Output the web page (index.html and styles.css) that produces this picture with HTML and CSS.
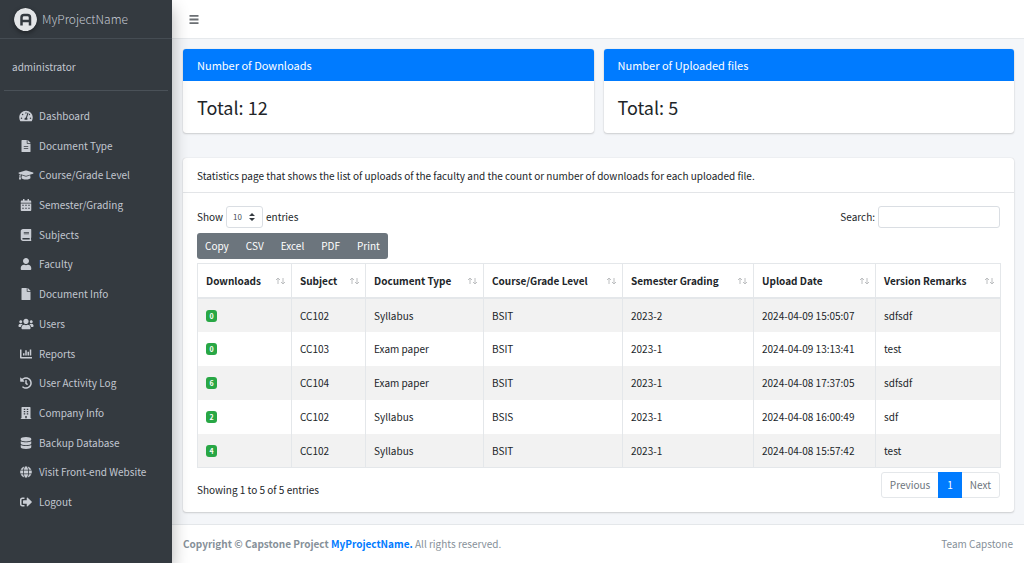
FILE: index.html
```html
<!DOCTYPE html>
<html lang="en">
<head>
    <meta charset="UTF-8">
    <meta name="viewport" content="width=device-width, initial-scale=1.0">
    <title>MyProjectName | Dashboard</title>
    <link rel="stylesheet" href="styles.css">
</head>
<body>
    <div class="wrapper">
        <aside class="sidebar">
            <a href="#" class="brand">
                <svg class="brand-logo" viewBox="0 0 46 46" aria-hidden="true">
                    <circle cx="23" cy="23" r="23" fill="#e3e5e7"/>
                    <path d="M15 35V19q0-5 5-5h7q5 0 5 5v16M15 26h17" fill="none" stroke="#343a40" stroke-width="5"/>
                </svg>
                <span>MyProjectName</span>
            </a>
            <div class="user-panel"><a href="#">administrator</a></div>
            <nav class="menu">
                <a href="#"><svg viewBox="0 0 576 512"><path d="M288 32C128.94 32 0 160.94 0 320c0 52.8 14.25 102.26 39.06 144.8 5.61 9.62 16.3 15.2 27.44 15.2h443c11.14 0 21.83-5.58 27.44-15.2C561.75 422.26 576 372.8 576 320c0-159.06-128.94-288-288-288zm0 64c14.71 0 26.58 10.13 30.32 23.65-1.11 2.26-2.64 4.23-3.45 6.67l-9.22 27.67c-5.13 3.49-10.97 6.01-17.64 6.01-17.67 0-32-14.33-32-32S270.33 96 288 96zM96 384c-17.67 0-32-14.33-32-32s14.33-32 32-32 32 14.33 32 32-14.33 32-32 32zm48-160c-17.67 0-32-14.33-32-32s14.33-32 32-32 32 14.33 32 32-14.33 32-32 32zm246.77-72.41l-61.33 184C343.13 347.33 352 364.54 352 384c0 11.72-3.38 22.55-8.88 32H232.88c-5.5-9.45-8.88-20.28-8.88-32 0-33.94 26.5-61.43 59.9-63.59l61.34-184.01c4.17-12.56 17.73-19.45 30.36-15.17 12.57 4.19 19.35 17.79 15.17 30.36zm14.66 57.2l15.52-46.55c3.47-1.29 7.13-2.23 11.05-2.23 17.67 0 32 14.33 32 32s-14.33 32-32 32c-11.38-.01-20.89-6.28-26.57-15.22zM480 384c-17.67 0-32-14.33-32-32s14.33-32 32-32 32 14.33 32 32-14.33 32-32 32z"/></svg>Dashboard</a>
                <a href="#"><svg viewBox="0 0 384 512"><path d="M224 136V0H24C10.7 0 0 10.7 0 24v464c0 13.3 10.7 24 24 24h336c13.3 0 24-10.7 24-24V160H248c-13.2 0-24-10.8-24-24zm64 236c0 6.6-5.4 12-12 12H108c-6.6 0-12-5.4-12-12v-8c0-6.6 5.4-12 12-12h168c6.6 0 12 5.4 12 12v8zm0-96c0 6.6-5.4 12-12 12H108c-6.6 0-12-5.4-12-12v-8c0-6.6 5.4-12 12-12h168c6.6 0 12 5.4 12 12v8zM384 121.9v6.1H256V0h6.1c6.4 0 12.5 2.5 17 7l97.9 98c4.5 4.5 7 10.6 7 16.9z"/></svg>Document Type</a>
                <a href="#"><svg viewBox="0 0 640 512"><path d="M622.34 153.2L343.4 67.5c-15.2-4.67-31.6-4.67-46.79 0L17.66 153.2c-23.54 7.23-23.54 38.36 0 45.59l48.63 14.94c-10.67 13.19-17.23 29.28-17.88 46.9C38.78 266.15 32 276.11 32 288c0 10.78 5.68 19.85 13.86 25.65L20.33 428.53C18.11 438.52 25.71 448 35.94 448h56.11c10.24 0 17.84-9.48 15.62-19.47L82.14 313.65C90.32 307.85 96 298.78 96 288c0-11.57-6.47-21.25-15.66-26.87.76-15.02 8.44-28.3 20.69-36.72L296.6 284.5c9.06 2.78 26.44 6.25 46.79 0l278.95-85.7c23.55-7.24 23.55-38.36 0-45.6zM352.79 315.09c-28.53 8.76-52.84 3.92-65.59 0l-145.02-44.55L128 384c0 35.35 85.96 64 192 64s192-28.65 192-64l-14.18-113.47-145.03 44.56z"/></svg>Course/Grade Level</a>
                <a href="#"><svg viewBox="0 0 448 512"><path fill-rule="evenodd" d="M0 192h448v272c0 26.5-21.5 48-48 48H48c-26.5 0-48-21.5-48-48zM64 244v48h64v-48zM192 244v48h64v-48zM320 244v48h64v-48zM64 372v48h64v-48zM192 372v48h64v-48zM320 372v48h64v-48zM400 64h-48V16c0-8.8-7.2-16-16-16h-32c-8.8 0-16 7.2-16 16v48H160V16c0-8.8-7.2-16-16-16h-32c-8.8 0-16 7.2-16 16v48H48C21.5 64 0 85.5 0 112v48h448v-48c0-26.5-21.5-48-48-48z"/></svg>Semester/Grading</a>
                <a href="#"><svg viewBox="0 0 448 512"><path d="M448 360V24c0-13.3-10.7-24-24-24H96C43 0 0 43 0 96v320c0 53 43 96 96 96h328c13.3 0 24-10.7 24-24v-16c0-7.5-3.5-14.3-8.9-18.7-4.2-15.4-4.2-59.3 0-74.7 5.4-4.3 8.9-11.1 8.9-18.6zM128 134c0-3.3 2.7-6 6-6h212c3.3 0 6 2.7 6 6v20c0 3.3-2.7 6-6 6H134c-3.3 0-6-2.7-6-6v-20zm0 64c0-3.3 2.7-6 6-6h212c3.3 0 6 2.7 6 6v20c0 3.3-2.7 6-6 6H134c-3.3 0-6-2.7-6-6v-20zm253.4 250H96c-17.7 0-32-14.3-32-32 0-17.6 14.4-32 32-32h285.4c-1.9 17.1-1.9 46.9 0 64z"/></svg>Subjects</a>
                <a href="#"><svg viewBox="0 0 448 512"><path d="M224 256c70.7 0 128-57.3 128-128S294.7 0 224 0 96 57.3 96 128s57.3 128 128 128zm89.6 32h-16.7c-22.2 10.2-46.9 16-72.9 16s-50.6-5.8-72.9-16h-16.7C60.2 288 0 348.2 0 422.4V464c0 26.5 21.5 48 48 48h352c26.5 0 48-21.5 48-48v-41.6c0-74.2-60.2-134.4-134.4-134.4z"/></svg>Faculty</a>
                <a href="#"><svg viewBox="0 0 384 512"><path d="M224 136V0H24C10.7 0 0 10.7 0 24v464c0 13.3 10.7 24 24 24h336c13.3 0 24-10.7 24-24V160H248c-13.2 0-24-10.8-24-24zm160-14.1v6.1H256V0h6.1c6.4 0 12.5 2.5 17 7l97.9 98c4.5 4.5 7 10.6 7 16.9z"/></svg>Document Info</a>
                <a href="#"><svg viewBox="0 0 640 512"><path d="M96 224c35.3 0 64-28.7 64-64s-28.7-64-64-64-64 28.7-64 64 28.7 64 64 64zm448 0c35.3 0 64-28.7 64-64s-28.7-64-64-64-64 28.7-64 64 28.7 64 64 64zm32 32h-64c-17.6 0-33.5 7.1-45.1 18.6 40.3 22.1 68.9 62 75.1 109.4h66c17.7 0 32-14.3 32-32v-32c0-35.3-28.7-64-64-64zm-256 0c61.9 0 112-50.1 112-112S381.9 32 320 32 208 82.1 208 144s50.1 112 112 112zm76.8 32h-8.3c-20.8 10-43.9 16-68.5 16s-47.6-6-68.5-16h-8.3C179.6 288 128 339.6 128 403.2V432c0 26.5 21.5 48 48 48h288c26.5 0 48-21.5 48-48v-28.8c0-63.6-51.6-115.2-115.2-115.2zm-223.7-13.4C161.5 263.1 145.6 256 128 256H64c-35.3 0-64 28.7-64 64v32c0 17.7 14.3 32 32 32h65.9c6.3-47.4 34.9-87.3 75.2-109.4z"/></svg>Users</a>
                <a href="#"><svg viewBox="0 0 512 512"><path d="M332.8 320h38.4c6.4 0 12.8-6.4 12.8-12.8V172.8c0-6.4-6.4-12.8-12.8-12.8h-38.4c-6.4 0-12.8 6.4-12.8 12.8v134.4c0 6.4 6.4 12.8 12.8 12.8zm96 0h38.4c6.4 0 12.8-6.4 12.8-12.8V76.8c0-6.4-6.4-12.8-12.8-12.8h-38.4c-6.4 0-12.8 6.4-12.8 12.8v230.4c0 6.4 6.4 12.8 12.8 12.8zm-288 0h38.4c6.4 0 12.8-6.4 12.8-12.8v-70.4c0-6.4-6.4-12.8-12.8-12.8h-38.4c-6.4 0-12.8 6.4-12.8 12.8v70.4c0 6.4 6.4 12.8 12.8 12.8zm96 0h38.4c6.4 0 12.8-6.4 12.8-12.8V108.8c0-6.4-6.4-12.8-12.8-12.8h-38.4c-6.4 0-12.8 6.4-12.8 12.8v198.4c0 6.4 6.4 12.8 12.8 12.8zM496 384H64V80c0-8.84-7.16-16-16-16H16C7.16 64 0 71.16 0 80v336c0 17.67 14.33 32 32 32h464c8.84 0 16-7.16 16-16v-32c0-8.84-7.16-16-16-16z"/></svg>Reports</a>
                <a href="#"><svg viewBox="0 0 512 512"><path d="M504 255.531c.253 136.64-111.18 248.372-247.82 248.468-59.015.042-113.223-20.53-155.822-54.911-11.077-8.94-11.905-25.541-1.839-35.607l11.267-11.267c8.609-8.609 22.353-9.551 31.891-1.984C173.062 425.135 212.781 440 256 440c101.705 0 184-82.311 184-184 0-101.705-82.311-184-184-184-48.814 0-93.149 18.969-126.068 49.932l50.754 50.754c10.08 10.08 2.941 27.314-11.313 27.314H24c-8.837 0-16-7.163-16-16V38.627c0-14.254 17.234-21.393 27.314-11.314l49.372 49.372C129.209 34.136 189.552 8 256 8c136.81 0 247.747 110.78 248 247.531zm-180.912 78.784l9.823-12.63c8.138-10.463 6.253-25.542-4.21-33.679L288 256.349V152c0-13.255-10.745-24-24-24h-16c-13.255 0-24 10.745-24 24v135.651l65.409 50.874c10.463 8.137 25.541 6.253 33.679-4.21z"/></svg>User Activity Log</a>
                <a href="#"><svg viewBox="0 0 448 512"><path fill-rule="evenodd" d="M436 480h-20V24c0-13.255-10.745-24-24-24H56C42.745 0 32 10.745 32 24v456H12c-6.627 0-12 5.373-12 12v20h448v-20c0-6.627-5.373-12-12-12zM128 76v52h64V76zM256 76v52h64V76zM128 172v52h64v-52zM256 172v52h64v-52zM128 268v52h64v-52zM256 268v52h64v-52zM192 384v96h64v-96z"/></svg>Company Info</a>
                <a href="#"><svg viewBox="0 0 448 512"><path d="M448 73.143v45.714C448 159.143 347.667 192 224 192S0 159.143 0 118.857V73.143C0 32.857 100.333 0 224 0s224 32.857 224 73.143zM448 176v102.857C448 319.143 347.667 352 224 352S0 319.143 0 278.857V176c48.125 33.143 136.208 48.572 224 48.572S399.874 209.143 448 176zm0 160v102.857C448 479.143 347.667 512 224 512S0 479.143 0 438.857V336c48.125 33.143 136.208 48.572 224 48.572S399.874 369.143 448 336z"/></svg>Backup Database</a>
                <a href="#"><svg viewBox="0 0 496 512"><path d="M336.5 160C322 70.7 287.8 8 248 8s-74 62.7-88.5 152h177zM152 256c0 22.2 1.2 43.5 3.3 64h185.3c2.1-20.5 3.3-41.8 3.3-64s-1.2-43.5-3.3-64H155.3c-2.1 20.5-3.3 41.8-3.3 64zm324.7-96c-28.6-67.9-86.5-120.4-158-141.6 24.4 33.8 41.2 84.7 50 141.6h108zM177.2 18.4C105.8 39.6 47.8 92.1 19.3 160h108c8.7-56.9 25.5-107.8 49.9-141.6zM487.4 192H372.7c2.1 21 3.3 42.5 3.3 64s-1.2 43-3.3 64h114.6c5.5-20.5 8.6-41.8 8.6-64s-3.1-43.5-8.5-64zM120 256c0-21.5 1.2-43 3.3-64H8.6C3.2 212.5 0 233.8 0 256s3.2 43.5 8.6 64h114.6c-2-21-3.2-42.5-3.2-64zm39.5 96c14.5 89.3 48.7 152 88.5 152s74-62.7 88.5-152h-177zm159.3 141.6c71.4-21.2 129.4-73.7 158-141.6h-108c-8.8 56.9-25.6 107.8-50 141.6zM19.3 352c28.6 67.9 86.5 120.4 158 141.6-24.4-33.8-41.2-84.7-50-141.6h-108z"/></svg>Visit Front-end Website</a>
                <a href="#"><svg viewBox="0 0 512 512"><path d="M497 273L329 441c-15 15-41 4.5-41-17v-96H152c-13.3 0-24-10.7-24-24v-96c0-13.3 10.7-24 24-24h136V88c0-21.4 25.9-32 41-17l168 168c9.3 9.4 9.3 24.6 0 34zM192 436v-40c0-6.6-5.4-12-12-12H96c-17.7 0-32-14.3-32-32V160c0-17.7 14.3-32 32-32h84c6.6 0 12-5.4 12-12V76c0-6.6-5.4-12-12-12H96c-53 0-96 43-96 96v192c0 53 43 96 96 96h84c6.6 0 12-5.4 12-12z"/></svg>Logout</a>
            </nav>
        </aside>

        <div class="main">
            <header class="navbar">
                <button type="button" class="toggle" aria-label="Toggle menu">
                    <svg viewBox="0 0 10 10"><path d="M0 1h10M0 5h10M0 9h10" stroke="#6b6f73" stroke-width="2"/></svg>
                </button>
            </header>

            <main class="content">
                <div class="totals">
                    <section class="card">
                        <div class="card-header primary">Number of Downloads</div>
                        <h2 class="total">Total: 12</h2>
                    </section>
                    <section class="card">
                        <div class="card-header primary">Number of Uploaded files</div>
                        <h2 class="total">Total: 5</h2>
                    </section>
                </div>

                <section class="card">
                    <div class="card-header">Statistics page that shows the list of uploads of the faculty and the count or number of downloads for each uploaded file.</div>
                    <div class="card-body">
                        <div class="filters">
                            <div class="length">
                                <label for="pageLength">Show</label>
                                <span class="select-box">
                                    <select id="pageLength">
                                        <option>10</option>
                                        <option>25</option>
                                        <option>50</option>
                                        <option>100</option>
                                    </select>
                                    <svg viewBox="0 0 6 8" aria-hidden="true"><path d="M3 0l3 3H0zM3 8l3-3H0z" fill="#343a40"/></svg>
                                </span>
                                <span>entries</span>
                            </div>
                            <div class="search">
                                <label for="search">Search:</label>
                                <input type="search" id="search">
                            </div>
                        </div>

                        <div class="btn-group">
                            <button type="button">Copy</button>
                            <button type="button">CSV</button>
                            <button type="button">Excel</button>
                            <button type="button">PDF</button>
                            <button type="button">Print</button>
                        </div>

                        <table class="data">
                            <colgroup>
                                <col class="col-downloads">
                                <col class="col-subject">
                                <col class="col-type">
                                <col class="col-course">
                                <col class="col-semester">
                                <col class="col-date">
                                <col class="col-remarks">
                            </colgroup>
                            <thead>
                                <tr>
                                    <th><div class="sort">Downloads <svg viewBox="0 0 11 8"><path d="M3 7V1M1 3l2-2 2 2M8 1v6M6 5l2 2 2-2"/></svg></div></th>
                                    <th><div class="sort">Subject <svg viewBox="0 0 11 8"><path d="M3 7V1M1 3l2-2 2 2M8 1v6M6 5l2 2 2-2"/></svg></div></th>
                                    <th><div class="sort">Document Type <svg viewBox="0 0 11 8"><path d="M3 7V1M1 3l2-2 2 2M8 1v6M6 5l2 2 2-2"/></svg></div></th>
                                    <th><div class="sort">Course/Grade Level <svg viewBox="0 0 11 8"><path d="M3 7V1M1 3l2-2 2 2M8 1v6M6 5l2 2 2-2"/></svg></div></th>
                                    <th><div class="sort">Semester Grading <svg viewBox="0 0 11 8"><path d="M3 7V1M1 3l2-2 2 2M8 1v6M6 5l2 2 2-2"/></svg></div></th>
                                    <th><div class="sort">Upload Date <svg viewBox="0 0 11 8"><path d="M3 7V1M1 3l2-2 2 2M8 1v6M6 5l2 2 2-2"/></svg></div></th>
                                    <th><div class="sort">Version Remarks <svg viewBox="0 0 11 8"><path d="M3 7V1M1 3l2-2 2 2M8 1v6M6 5l2 2 2-2"/></svg></div></th>
                                </tr>
                            </thead>
                            <tbody>
                                <tr>
                                    <td><span class="badge">0</span></td>
                                    <td>CC102</td>
                                    <td>Syllabus</td>
                                    <td>BSIT</td>
                                    <td>2023-2</td>
                                    <td>2024-04-09 15:05:07</td>
                                    <td>sdfsdf</td>
                                </tr>
                                <tr>
                                    <td><span class="badge">0</span></td>
                                    <td>CC103</td>
                                    <td>Exam paper</td>
                                    <td>BSIT</td>
                                    <td>2023-1</td>
                                    <td>2024-04-09 13:13:41</td>
                                    <td>test</td>
                                </tr>
                                <tr>
                                    <td><span class="badge">6</span></td>
                                    <td>CC104</td>
                                    <td>Exam paper</td>
                                    <td>BSIT</td>
                                    <td>2023-1</td>
                                    <td>2024-04-08 17:37:05</td>
                                    <td>sdfsdf</td>
                                </tr>
                                <tr>
                                    <td><span class="badge">2</span></td>
                                    <td>CC102</td>
                                    <td>Syllabus</td>
                                    <td>BSIS</td>
                                    <td>2023-1</td>
                                    <td>2024-04-08 16:00:49</td>
                                    <td>sdf</td>
                                </tr>
                                <tr>
                                    <td><span class="badge">4</span></td>
                                    <td>CC102</td>
                                    <td>Syllabus</td>
                                    <td>BSIT</td>
                                    <td>2023-1</td>
                                    <td>2024-04-08 15:57:42</td>
                                    <td>test</td>
                                </tr>
                            </tbody>
                        </table>

                        <div class="table-footer">
                            <span>Showing 1 to 5 of 5 entries</span>
                            <nav class="pagination">
                                <a href="#">Previous</a>
                                <a href="#" class="active">1</a>
                                <a href="#">Next</a>
                            </nav>
                        </div>
                    </div>
                </section>
            </main>

            <footer class="footer">
                <div><strong>Copyright © Capstone Project <a href="#">MyProjectName.</a></strong> All rights reserved.</div>
                <div>Team Capstone</div>
            </footer>
        </div>
    </div>
</body>
</html>
```
FILE: styles.css
```css
* {
    box-sizing: border-box;
}

body {
    margin: 0;
    font-family: "Noto Sans CJK SC", "Open Sans", sans-serif;
    font-size: 10px;
    line-height: 16px;
    color: #212529;
    background-color: #f4f6f9;
}

a {
    color: #007bff;
    text-decoration: none;
}

button, input, select {
    font: inherit;
}

.wrapper {
    display: flex;
    min-height: 100vh;
}

/* Sidebar */
.sidebar {
    display: flex;
    flex-direction: column;
    flex: 0 0 172px;
    z-index: 1;
    background-color: #343a40;
    box-shadow: 0 8px 16px rgba(0, 0, 0, 0.3);
}

.sidebar a {
    color: #c2c7d0;
}

.sidebar .brand {
    display: flex;
    align-items: center;
    gap: 5px;
    height: 39px;
    padding-left: 14px;
    border-bottom: 1px solid #454c53;
    font-size: 12px;
    font-weight: 300;
}

.brand-logo {
    width: 23px;
    height: 23px;
    border-radius: 50%;
    box-shadow: 0 2px 5px rgba(0, 0, 0, 0.4);
}

.user-panel {
    margin: 0 4px;
    padding: 20px 8px 15px;
    border-bottom: 1px solid #4a5158;
}

.menu {
    display: flex;
    flex: 1;
    flex-direction: column;
    justify-content: space-between;
    padding: 11px 6px 47px 18px;
}

.menu a {
    display: flex;
    align-items: center;
    gap: 5px;
    height: 28px;
}

.menu svg {
    width: 16px;
    height: 12px;
    fill: #c9cdd4;
}

/* Main column */
.main {
    display: flex;
    flex: 1;
    flex-direction: column;
    min-width: 0;
}

.navbar {
    display: flex;
    align-items: center;
    height: 39px;
    padding: 0 17px;
    background-color: #fff;
    border-bottom: 1px solid #e6e9ec;
}

.toggle {
    display: flex;
    padding: 0;
    border: none;
    background: none;
    cursor: pointer;
}

.toggle svg {
    width: 10px;
    height: 9px;
}

.content {
    flex: 1;
    padding: 10px 10px 11px 11px;
}

.totals {
    display: grid;
    grid-template-columns: 1fr 1fr;
    gap: 10px;
    margin-bottom: 25px;
}

.card {
    background-color: #fff;
    border-radius: 3px;
    box-shadow: 0 0 1px rgba(0, 0, 0, 0.2), 0 1px 2px rgba(0, 0, 0, 0.15);
}

.card-header {
    padding: 10px 14px 8px;
    border-bottom: 1px solid #e3e5e8;
}

.card-header.primary {
    padding: 8px 14px;
    border-bottom: none;
    border-radius: 3px 3px 0 0;
    background-color: #007bff;
    color: #fff;
    font-size: 11px;
}

.total {
    margin: 0;
    padding: 14px;
    font-size: 18px;
    font-weight: 400;
    line-height: 24px;
}

.card-body {
    padding: 13px 14px 14px;
}

.filters {
    display: flex;
    justify-content: space-between;
    margin-bottom: 5px;
}

.length, .search {
    display: flex;
    align-items: center;
    gap: 3px;
}

.select-box {
    position: relative;
}

.select-box select {
    display: block;
    width: 37px;
    height: 22px;
    padding: 0 6px;
    appearance: none;
    border: 1px solid #dadee3;
    border-radius: 3px;
    background-color: #fff;
    color: #495057;
    font-size: 8px;
}

.select-box svg {
    position: absolute;
    top: 7px;
    right: 8px;
    width: 6px;
    height: 8px;
    pointer-events: none;
}

.search input {
    width: 122px;
    height: 22px;
    padding: 0 6px;
    border: 1px solid #dadee3;
    border-radius: 3px;
}

.btn-group {
    display: inline-flex;
    gap: 1px;
    margin-bottom: 4px;
    border-radius: 3px;
    background-color: #6c757d;
}

.btn-group button {
    height: 26px;
    padding: 0 8px;
    border: none;
    background: none;
    color: #fff;
    cursor: pointer;
}

/* Data table */
.data {
    width: 100%;
    table-layout: fixed;
    border-collapse: collapse;
    border: 1px solid #e4e7ea;
}

.col-downloads { width: 94px; }
.col-subject { width: 74px; }
.col-type { width: 118px; }
.col-course { width: 139px; }
.col-semester { width: 131px; }
.col-date { width: 122px; }
.col-remarks { width: 125px; }

.data th, .data td {
    height: 34px;
    padding: 1px 8px 0;
    border-right: 1px solid #e4e7ea;
    text-align: left;
    white-space: nowrap;
}

.data th {
    padding-right: 5px;
    border-bottom: 2px solid #e4e7ea;
}

.data tbody tr:nth-child(odd) {
    background-color: #f2f2f2;
}

.sort {
    display: flex;
    align-items: center;
    justify-content: space-between;
}

.sort svg {
    width: 11px;
    height: 8px;
    fill: none;
    stroke: #bcbec0;
}

.badge {
    display: block;
    width: 11px;
    border-radius: 3px;
    background-color: #28a745;
    color: #fff;
    font-size: 7px;
    font-weight: 700;
    line-height: 12px;
    text-align: center;
}

.table-footer {
    display: flex;
    align-items: flex-end;
    justify-content: space-between;
    padding-top: 4px;
}

.pagination {
    display: flex;
    border: 1px solid #e4e7ea;
    border-radius: 3px;
}

.pagination a {
    padding: 4px 8px;
    color: #6c757d;
}

.pagination .active {
    margin: -1px 0;
    padding: 5px 9px;
    background-color: #007bff;
    color: #fff;
}

.footer {
    display: flex;
    justify-content: space-between;
    padding: 11px;
    border-top: 1px solid #e4e7ea;
    background-color: #fff;
    color: #869099;
}
```
